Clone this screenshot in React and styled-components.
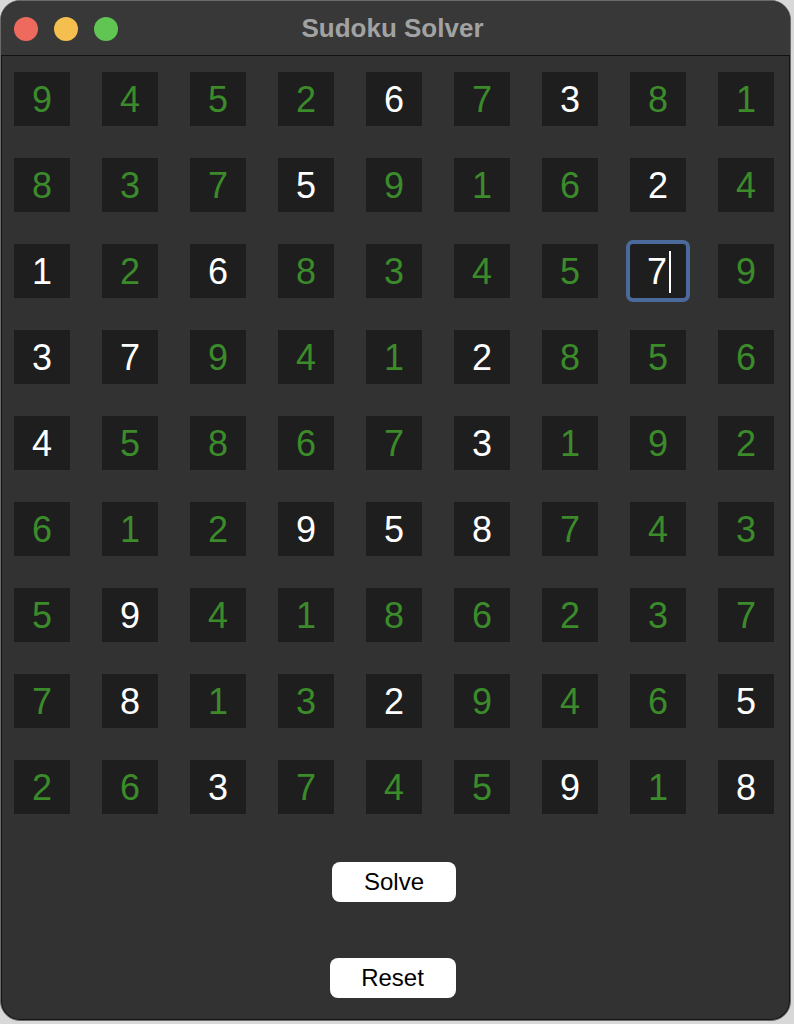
import React from 'react'
import styled, { createGlobalStyle } from 'styled-components'

const GlobalStyle = createGlobalStyle`
  html, body {
    margin: 0;
    padding: 0;
    background: #d8d8d8;
  }
  body {
    font-family: 'Liberation Sans', Arial, sans-serif;
  }
`

const Window = styled.div`
  width: 789px;
  height: 1019px;
  border: 1px solid #6a6a6a;
  border-radius: 20px;
  background: #323232;
  overflow: hidden;
  box-shadow: inset 0 0 0 1px #151515;
  display: flex;
  flex-direction: column;
`

const TitleBar = styled.div`
  height: 54px;
  flex: none;
  background: #383838;
  border-bottom: 1px solid #121212;
  display: grid;
  grid-template-columns: 1fr auto 1fr;
  align-items: center;
  padding: 0 13px;
`

const Lights = styled.div`
  display: flex;
  gap: 16px;
  margin-top: 2px;
`

const Light = styled.span`
  width: 24px;
  height: 24px;
  border-radius: 50%;
  background: ${p => p.color};
`

const Title = styled.div`
  font-size: 26px;
  font-weight: bold;
  color: #a2a2a2;
  margin-top: 1px;
  margin-right: 6px;
`

const Body = styled.div`
  flex: 1;
  display: flex;
  flex-direction: column;
  align-items: center;
  padding-top: 16px;
`

const Board = styled.div`
  display: grid;
  grid-template-columns: repeat(9, 56px);
  grid-auto-rows: 54px;
  column-gap: 32px;
  row-gap: 32px;
  margin-right: 3px;
`

const Cell = styled.div`
  background: #1e1e1e;
  display: flex;
  align-items: center;
  justify-content: center;
  padding-top: 2px;
  font-size: 36px;
  color: ${p => (p.given ? '#ffffff' : '#3b8b2b')};
  border-radius: ${p => (p.selected ? '3px' : '0')};
  box-shadow: ${p => (p.selected ? '0 0 0 4px #4a6a9c' : 'none')};
  padding-left: ${p => (p.selected ? '2px' : '0')};
`

const Caret = styled.span`
  display: inline-block;
  width: 2px;
  height: 42px;
  background: #ffffff;
  margin-left: 2px;
`

const Button = styled.button`
  width: ${p => p.w}px;
  height: 40px;
  border: none;
  border-radius: 8px;
  background: #ffffff;
  color: #000000;
  font-family: 'Liberation Sans', Arial, sans-serif;
  font-size: 24px;
  padding: 0;
  margin-top: ${p => p.top}px;
  margin-right: ${p => p.shift}px;
`

const digits = [
  '945267381',
  '837591624',
  '126834579',
  '379412856',
  '458673192',
  '612958743',
  '594186237',
  '781329465',
  '263745918',
]

const givens = [
  '000010100',
  '000100010',
  '101000010',
  '110001000',
  '100001000',
  '000111000',
  '010000000',
  '010010001',
  '001000101',
]

export default function App() {
  return (
    <>
      <GlobalStyle />
      <Window>
        <TitleBar>
          <Lights>
            <Light color="#ee6a5f" />
            <Light color="#f5bf4f" />
            <Light color="#61c554" />
          </Lights>
          <Title>Sudoku Solver</Title>
          <div />
        </TitleBar>
        <Body>
          <Board>
            {digits.map((row, r) =>
              row.split('').map((d, c) => {
                const selected = r === 2 && c === 7
                return (
                  <Cell key={`${r}-${c}`} given={givens[r][c] === '1'} selected={selected}>
                    {d}
                    {selected && <Caret />}
                  </Cell>
                )
              })
            )}
          </Board>
          <Button w={124} top={48} shift={3}>Solve</Button>
          <Button w={126} top={56} shift={6}>Reset</Button>
        </Body>
      </Window>
    </>
  )
}
